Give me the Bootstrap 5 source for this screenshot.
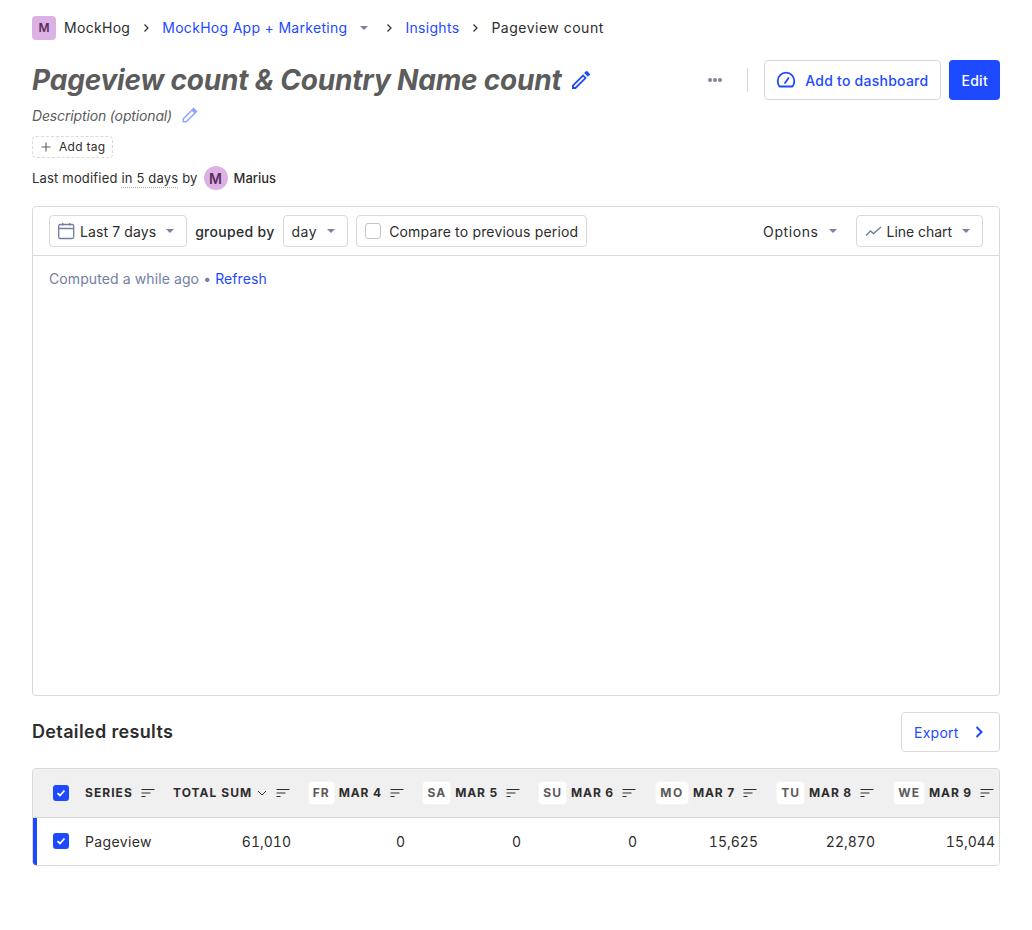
<!DOCTYPE html>
<html lang="en">
<head>
    <meta charset="UTF-8">
    <meta name="viewport" content="width=device-width, initial-scale=1.0">
    <title>Pageview count</title>
    <link href="https://cdn.jsdelivr.net/npm/bootstrap@5.3.0/dist/css/bootstrap.min.css" rel="stylesheet">
    <style>
        body {
            font-family: Inter, "Liberation Sans", sans-serif;
            font-size: 14px;
            letter-spacing: .2px;
            color: #2d2d2d;
            background: #fff;
            padding: 16px 32px 0;
        }
        a { color: #1d4aff; text-decoration: none; }
        svg { display: block; flex-shrink: 0; }

        .crumbs { height: 24px; letter-spacing: .3px; line-height: 20px; }
        .crumb-last { letter-spacing: .5px; }
        .crumb-logo {
            width: 24px; height: 24px; border-radius: 4px;
            background: #dcb1e3; color: #572e5e;
            font-weight: 600; font-size: 12px; letter-spacing: 0;
            display: flex; align-items: center; justify-content: center;
        }
        .crumb-sep { width: 32px; display: flex; justify-content: center; }
        .caret-down {
            width: 0; height: 0;
            border-left: 4px solid transparent; border-right: 4px solid transparent;
            border-top: 4px solid #7c80a3;
        }
        .caret-crumb { margin: 0 5px 0 13px; }
        .caret-gap { margin-left: 10px; }
        .caret-end { margin-right: 4px; }

        .title-row { margin-top: 20px; height: 40px; }
        .page-title { font-size: 28px; font-weight: 700; font-style: italic; color: #5c5c5c; margin: 0; padding-top: 2px; letter-spacing: -.2px; }
        .title-pen { margin-left: 7px; }
        .desc-row { margin-top: 4px; height: 22px; color: #5c5c5c; font-style: italic; letter-spacing: -.15px; }
        .tag-add {
            margin-top: 10px; width: 81px; height: 22px;
            border: 1px dashed #d9d9d9; border-radius: 4px;
            font-size: 12px; padding-left: 7px; letter-spacing: .3px;
        }
        .tag-ico { margin-right: 7px; }
        .modified { margin-top: 8px; height: 24px; font-size: 13px; line-height: 17px; letter-spacing: .18px; }
        .modified span { margin-top: 1px; }
        .dotted-time { border-bottom: 1px dotted #a5a5a5; }
        .modified .user-dot {
            width: 24px; height: 24px; border-radius: 50%; margin: 0 6px;
            background: #dcb1e3; color: #572e5e; font-weight: 600; font-size: 14px; letter-spacing: 0;
            display: flex; align-items: center; justify-content: center;
        }
        .user-name { letter-spacing: 0; }

        .more-dots { width: 40px; justify-content: center; }
        .more-dots i { width: 4px; height: 4px; border-radius: 50%; background: #7c80a3; margin: 0 .5px; display: block; }
        .v-line { width: 1px; height: 24px; background: #d9d9d9; margin: 0 16px 0 12px; }
        .btn-plain {
            height: 40px; padding: 0 12px; border: 1px solid #d9d9d9; border-radius: 4px;
            background: #fff; color: #1d4aff; font-size: 14px; font-weight: 500; letter-spacing: .25px;
        }
        .btn-plain:hover { background: #fff; color: #1d4aff; border-color: #d9d9d9; }
        .gauge-ico { margin: 0 9px 0 -1px; }
        .btn-edit {
            height: 40px; padding: 0 12px; border: 0; border-radius: 4px;
            background: #1d4aff; color: #fff; font-size: 14px; font-weight: 500; margin-left: 8px; letter-spacing: .3px;
        }
        .btn-edit:hover { background: #1d4aff; color: #fff; }

        .chart-card { margin-top: 16px; height: 490px; border: 1px solid #d9d9d9; border-radius: 4px; }
        .chart-bar { height: 49px; padding: 8px 16px; border-bottom: 1px solid #d9d9d9; }
        .pick {
            height: 32px; border: 1px solid #d9d9d9; border-radius: 4px; background: #fff;
            font-size: 14px; padding: 0 8px;
        }
        .strong-label { font-weight: 500; margin: 0 8px; letter-spacing: .3px; }
        .pick-day { letter-spacing: .5px; }
        .pick-compare { letter-spacing: .17px; }
        .box-empty { width: 16px; height: 16px; border: 1px solid #c4c4c4; border-radius: 3px; }
        .options-label { letter-spacing: .6px; }
        .pick-chart { margin-left: 19px; letter-spacing: -.05px; }
        .pick-date { letter-spacing: .1px; }
        .computed { padding: 14px 16px; color: #747ea2; line-height: 18px; letter-spacing: .1px; }

        .results-head { margin-top: 16px; height: 40px; }
        .results-title { font-size: 18px; font-weight: 600; margin: 0; letter-spacing: .35px; }
        .btn-export { height: 40px; width: 99px; padding: 0 12px; font-weight: 400; }

        .results-wrap { margin-top: 16px; border: 1px solid #d9d9d9; border-radius: 4px; overflow: hidden; }
        .results-table { table-layout: fixed; width: 966px; border-collapse: collapse; }
        .results-table th, .results-table td { padding: 0 8px; white-space: nowrap; box-shadow: none; vertical-align: middle; }
        .results-table thead tr { height: 48px; }
        .results-table thead th {
            background: #f0f0f0; border-bottom: 1px solid #d9d9d9;
            font-size: 12px; font-weight: 700; letter-spacing: 1.05px; color: #2d2d2d;
        }
        .results-table tbody tr { height: 48px; }
        .results-table tbody td { border: 0; background: #fff; color: #2d2d2d; letter-spacing: .35px; }
        .results-table tbody td.num { text-align: right; font-variant-numeric: tabular-nums; letter-spacing: 0; }
        .results-table td.first-cell { position: relative; }
        .series-flag { position: absolute; left: 0; top: 0; bottom: 0; width: 4px; background: #1d4aff; }
        .w-a { width: 44px; }
        .w-b { width: 88px; }
        .w-c { width: 134px; }
        .w-d { width: 114px; }
        .w-e { width: 116px; }
        .w-f { width: 121px; }
        .w-g { width: 117px; }
        .w-h { width: 116px; }
        .results-table thead th.date-col { padding-right: 9px; }
        .results-table td.num.last-cell { padding-right: 4px; }
        .results-table thead th.last-cell { padding-right: 5px; }
        .tick {
            width: 16px; height: 16px; border-radius: 3px; background: #1d4aff; margin-left: 20px;
            display: flex; align-items: center; justify-content: center;
        }
        .results-table th.tick-cell, .results-table td.tick-cell { padding: 0; }
        .day-chip {
            background: #fff; border-radius: 4px; color: #5c5c5c; height: 24px; padding: 0 4px;
            display: inline-flex; align-items: center; margin-right: 4px; border: 1px solid #f5f5f5;
        }
        .mo-chip { letter-spacing: 1.6px; }
        .date-text { letter-spacing: .85px; }
        .head-cell { display: flex; align-items: center; justify-content: flex-end; }
        .head-start { justify-content: flex-start; }
    </style>
</head>
<body>
    <div class="crumbs d-flex align-items-center">
        <div class="crumb-logo">M</div>
        <span class="ms-2">MockHog</span>
        <span class="crumb-sep"><svg width="12" height="12" viewBox="0 0 12 12" fill="none" stroke="#2d2d2d" stroke-width="1.2"><path d="M4.500 2.500 8 6 4.500 9.500"/></svg></span>
        <a href="#">MockHog App + Marketing</a>
        <span class="caret-down caret-crumb"></span>
        <span class="crumb-sep"><svg width="12" height="12" viewBox="0 0 12 12" fill="none" stroke="#2d2d2d" stroke-width="1.2"><path d="M4.500 2.500 8 6 4.500 9.500"/></svg></span>
        <a href="#">Insights</a>
        <span class="crumb-sep"><svg width="12" height="12" viewBox="0 0 12 12" fill="none" stroke="#2d2d2d" stroke-width="1.2"><path d="M4.500 2.500 8 6 4.500 9.500"/></svg></span>
        <span class="crumb-last">Pageview count</span>
    </div>

    <div class="title-row d-flex align-items-center">
        <h1 class="page-title">Pageview count &amp; Country Name count</h1>
        <svg class="title-pen" width="24" height="24" viewBox="0 0 24 24" fill="#1d4aff"><path d="M3 17.250V21h3.750L17.810 9.940l-3.750-3.750L3 17.250zM20.710 7.040a1 1 0 0 0 0-1.410l-2.340-2.340a1 1 0 0 0-1.410 0l-1.830 1.830 3.750 3.750 1.830-1.830z"/><path fill="#fff" d="M5 17.800 14.100 8.700l1.200 1.200L6.200 19H5z"/></svg>
        <div class="ms-auto d-flex align-items-center">
            <div class="more-dots d-flex align-items-center"><i></i><i></i><i></i></div>
            <div class="v-line"></div>
            <button class="btn btn-plain d-flex align-items-center" type="button">
                <svg class="gauge-ico" width="20" height="20" viewBox="0 0 20 20" fill="none" stroke="#1d4aff" stroke-width="1.800" stroke-linecap="round" stroke-linejoin="round"><path d="M3.500 16.500h13c1.200-1.600 1.800-3.500 1.800-5.500a8.300 8.300 0 0 0-16.600 0c0 2 .6 3.900 1.800 5.500z"/><path d="m9 13 3.500-5"/></svg>
                Add to dashboard
            </button>
            <button class="btn btn-edit" type="button">Edit</button>
        </div>
    </div>

    <div class="desc-row d-flex align-items-center">
        <span>Description (optional)</span>
        <svg class="ms-2" width="20" height="20" viewBox="0 0 24 24" fill="none" stroke="#8ea4ff" stroke-width="1.800"><path d="M4 16.500V20h3.500L18 9.500 14.500 6 4 16.500z"/><path fill="#8ea4ff" d="m16.300 4.200 3.500 3.500-1 1-3.500-3.500z"/></svg>
    </div>

    <div class="tag-add d-flex align-items-center">
        <svg class="tag-ico" width="12" height="12" viewBox="0 0 12 12" stroke="#5c5c5c" stroke-width="1.100"><path d="M6 1.500v9M1.500 6h9"/></svg>
        Add tag
    </div>

    <div class="modified d-flex align-items-center">
        <span>Last modified&nbsp;</span><span class="dotted-time">in 5 days</span><span>&nbsp;by</span>
        <span class="user-dot">M</span>
        <span class="fw-medium user-name">Marius</span>
    </div>

    <div class="chart-card">
        <div class="chart-bar d-flex align-items-center">
            <div class="pick pick-date d-flex align-items-center">
                <svg class="me-1" width="18" height="18" viewBox="0 0 18 18" fill="none" stroke="#747ea2" stroke-width="1.300"><rect x=".7" y="2.500" width="15" height="14" rx="1.500"/><path d="M.7 6.500h15M4.700 1v2.500M11.700 1v2.500"/></svg>
                <span>Last 7 days</span>
                <span class="caret-down caret-gap caret-end"></span>
            </div>
            <span class="strong-label">grouped by</span>
            <div class="pick pick-day d-flex align-items-center">
                <span>day</span>
                <span class="caret-down caret-gap caret-end"></span>
            </div>
            <div class="pick pick-compare d-flex align-items-center ms-2">
                <span class="box-empty me-2"></span>
                <span>Compare to previous period</span>
            </div>
            <div class="ms-auto d-flex align-items-center">
                <span class="options-label">Options</span>
                <span class="caret-down caret-gap"></span>
                <div class="pick pick-chart d-flex align-items-center">
                    <svg class="me-1" width="18" height="18" viewBox="0 0 18 18" fill="none" stroke="#747ea2" stroke-width="1.400"><path d="m1 13.500 4.500-4.500 3 2.500L16 5"/></svg>
                    <span>Line chart</span>
                    <span class="caret-down caret-gap caret-end"></span>
                </div>
            </div>
        </div>
        <div class="computed">Computed a while ago &bull; <a href="#">Refresh</a></div>
    </div>

    <div class="results-head d-flex align-items-center justify-content-between">
        <h2 class="results-title">Detailed results</h2>
        <button class="btn btn-plain btn-export d-flex align-items-center justify-content-between" type="button">
            Export
            <svg width="16" height="16" viewBox="0 0 16 16" fill="none" stroke="#1d4aff" stroke-width="2"><path d="m5.500 3 5 5-5 5"/></svg>
        </button>
    </div>

    <div class="results-wrap">
        <table class="table results-table mb-0">
            <thead>
                <tr>
                    <th class="tick-cell w-a"><div class="tick"><svg width="10" height="10" viewBox="0 0 10 10" fill="none" stroke="#fff" stroke-width="1.800"><path d="m1.500 5.200 2.500 2.300 4.500-5"/></svg></div></th>
                    <th class="w-b"><div class="head-cell head-start">SERIES<svg class="ms-2" width="14" height="10" viewBox="0 0 14 10" stroke="#2d2d2d" stroke-width="1.100"><path d="M.5 1.500h13M.5 5h9M.5 8.500h4"/></svg></div></th>
                    <th class="w-c date-col"><div class="head-cell head-start">TOTAL SUM<svg class="ms-1" width="12" height="12" viewBox="0 0 12 12" fill="none" stroke="#2d2d2d"><path d="m2 4 4 4 4-4"/></svg><svg class="ms-2" width="14" height="10" viewBox="0 0 14 10" stroke="#2d2d2d" stroke-width="1.100"><path d="M.5 1.500h13M.5 5h9M.5 8.500h4"/></svg></div></th>
                    <th class="w-d date-col"><div class="head-cell"><span class="day-chip">FR</span><span class="date-text">MAR 4</span><svg class="ms-2" width="14" height="10" viewBox="0 0 14 10" stroke="#2d2d2d" stroke-width="1.100"><path d="M.5 1.500h13M.5 5h9M.5 8.500h4"/></svg></div></th>
                    <th class="w-e date-col"><div class="head-cell"><span class="day-chip">SA</span><span class="date-text">MAR 5</span><svg class="ms-2" width="14" height="10" viewBox="0 0 14 10" stroke="#2d2d2d" stroke-width="1.100"><path d="M.5 1.500h13M.5 5h9M.5 8.500h4"/></svg></div></th>
                    <th class="w-e date-col"><div class="head-cell"><span class="day-chip">SU</span><span class="date-text">MAR 6</span><svg class="ms-2" width="14" height="10" viewBox="0 0 14 10" stroke="#2d2d2d" stroke-width="1.100"><path d="M.5 1.500h13M.5 5h9M.5 8.500h4"/></svg></div></th>
                    <th class="w-f date-col"><div class="head-cell"><span class="day-chip mo-chip">MO</span><span class="date-text">MAR 7</span><svg class="ms-2" width="14" height="10" viewBox="0 0 14 10" stroke="#2d2d2d" stroke-width="1.100"><path d="M.5 1.500h13M.5 5h9M.5 8.500h4"/></svg></div></th>
                    <th class="w-g date-col"><div class="head-cell"><span class="day-chip">TU</span><span class="date-text">MAR 8</span><svg class="ms-2" width="14" height="10" viewBox="0 0 14 10" stroke="#2d2d2d" stroke-width="1.100"><path d="M.5 1.500h13M.5 5h9M.5 8.500h4"/></svg></div></th>
                    <th class="w-h last-cell"><div class="head-cell"><span class="day-chip">WE</span><span class="date-text">MAR 9</span><svg class="ms-2" width="14" height="10" viewBox="0 0 14 10" stroke="#2d2d2d" stroke-width="1.100"><path d="M.5 1.500h13M.5 5h9M.5 8.500h4"/></svg></div></th>
                </tr>
            </thead>
            <tbody>
                <tr>
                    <td class="tick-cell first-cell"><span class="series-flag"></span><div class="tick"><svg width="10" height="10" viewBox="0 0 10 10" fill="none" stroke="#fff" stroke-width="1.800"><path d="m1.500 5.200 2.500 2.300 4.500-5"/></svg></div></td>
                    <td>Pageview</td>
                    <td class="num">61,010</td>
                    <td class="num">0</td>
                    <td class="num">0</td>
                    <td class="num">0</td>
                    <td class="num">15,625</td>
                    <td class="num">22,870</td>
                    <td class="num last-cell">15,044</td>
                </tr>
            </tbody>
        </table>
    </div>

    <script src="https://cdn.jsdelivr.net/npm/bootstrap@5.3.0/dist/js/bootstrap.bundle.min.js"></script>
</body>
</html>
